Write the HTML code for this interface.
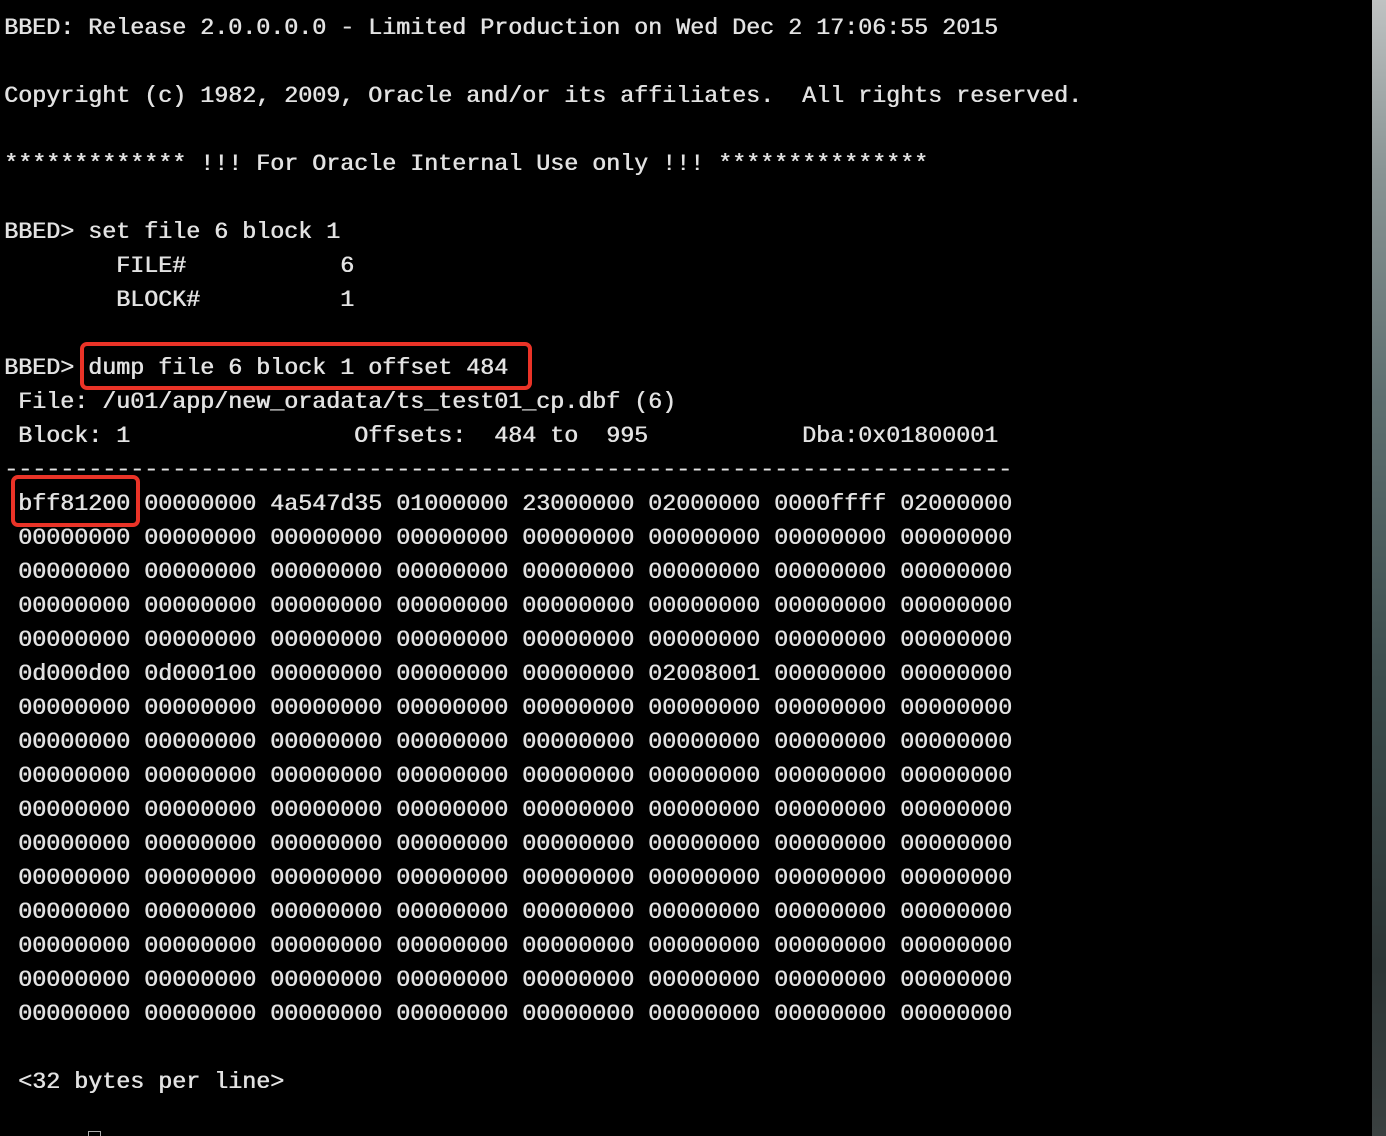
<!DOCTYPE html>
<html><head><meta charset="utf-8"><style>
html,body{margin:0;padding:0;background:#000;width:1386px;height:1136px;overflow:hidden;position:relative}
pre{position:absolute;left:4px;top:12px;margin:0;font-family:"Liberation Mono",monospace;font-size:23.33px;line-height:34px;color:#e2e2e2;letter-spacing:0;text-shadow:0.6px 0 0 #e2e2e2}
.strip{position:absolute;left:1372px;top:0;width:14px;height:1136px;background:linear-gradient(#bfc2c2,#8a9494 15%,#5f6f70 35%,#3c4c4c 60%,#2c3434 85%,#3a4040)}
.box{position:absolute;border:4px solid #ea3327;border-radius:7px}
.cur{position:absolute;left:88px;top:1131px;width:13px;height:5px;border:1px solid #aaa;border-bottom:none;box-sizing:border-box}
</style></head><body>
<div class="strip"></div>
<pre>BBED: Release 2.0.0.0.0 - Limited Production on Wed Dec 2 17:06:55 2015

Copyright (c) 1982, 2009, Oracle and/or its affiliates.  All rights reserved.

************* !!! For Oracle Internal Use only !!! ***************

BBED&gt; set file 6 block 1
        FILE#           6
        BLOCK#          1

BBED&gt; dump file 6 block 1 offset 484
 File: /u01/app/new_oradata/ts_test01_cp.dbf (6)
 Block: 1                Offsets:  484 to  995           Dba:0x01800001
------------------------------------------------------------------------
 bff81200 00000000 4a547d35 01000000 23000000 02000000 0000ffff 02000000
 00000000 00000000 00000000 00000000 00000000 00000000 00000000 00000000
 00000000 00000000 00000000 00000000 00000000 00000000 00000000 00000000
 00000000 00000000 00000000 00000000 00000000 00000000 00000000 00000000
 00000000 00000000 00000000 00000000 00000000 00000000 00000000 00000000
 0d000d00 0d000100 00000000 00000000 00000000 02008001 00000000 00000000
 00000000 00000000 00000000 00000000 00000000 00000000 00000000 00000000
 00000000 00000000 00000000 00000000 00000000 00000000 00000000 00000000
 00000000 00000000 00000000 00000000 00000000 00000000 00000000 00000000
 00000000 00000000 00000000 00000000 00000000 00000000 00000000 00000000
 00000000 00000000 00000000 00000000 00000000 00000000 00000000 00000000
 00000000 00000000 00000000 00000000 00000000 00000000 00000000 00000000
 00000000 00000000 00000000 00000000 00000000 00000000 00000000 00000000
 00000000 00000000 00000000 00000000 00000000 00000000 00000000 00000000
 00000000 00000000 00000000 00000000 00000000 00000000 00000000 00000000
 00000000 00000000 00000000 00000000 00000000 00000000 00000000 00000000

 &lt;32 bytes per line&gt;
</pre>
<div class="box" style="left:80px;top:342px;width:444px;height:40px"></div>
<div class="box" style="left:11px;top:475px;width:121px;height:44px"></div>
<div class="cur"></div>
</body></html>
